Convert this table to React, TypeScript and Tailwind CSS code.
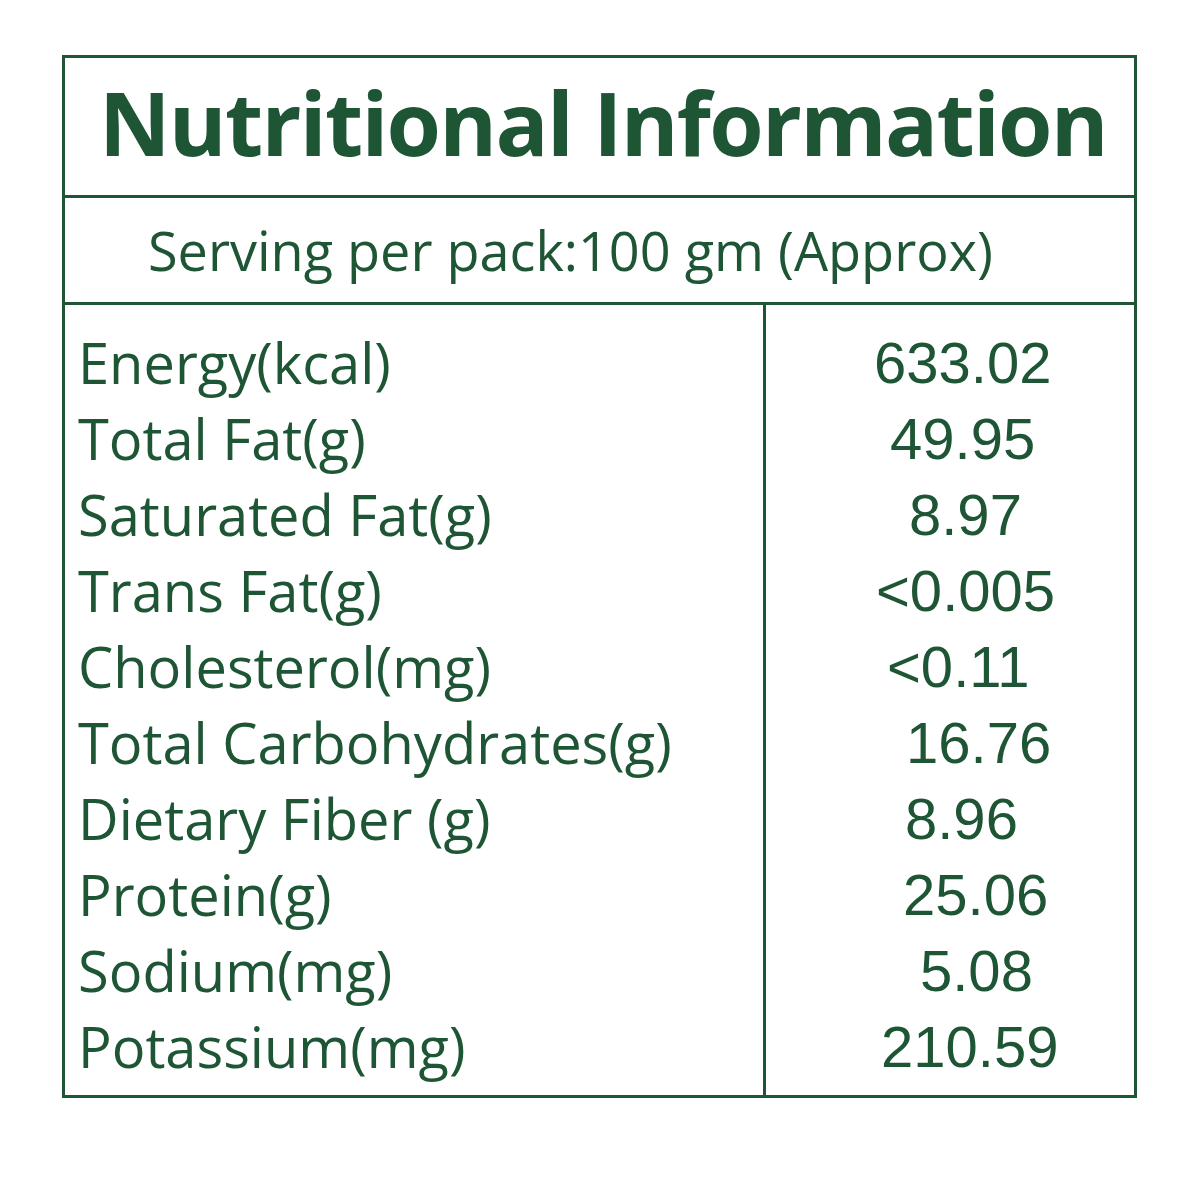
const rows: { label: string; value: string; pad: string }[] = [
  { label: 'Energy(kcal)', value: '633.02', pad: 'pl-[108px]' },
  { label: 'Total Fat(g)', value: '49.95', pad: 'pl-[124px]' },
  { label: 'Saturated Fat(g)', value: '8.97', pad: 'pl-[143px]' },
  { label: 'Trans Fat(g)', value: '<0.005', pad: 'pl-[110px]' },
  { label: 'Cholesterol(mg)', value: '<0.11', pad: 'pl-[121px]' },
  { label: 'Total Carbohydrates(g)', value: '16.76', pad: 'pl-[140px]' },
  { label: 'Dietary Fiber (g)', value: '8.96', pad: 'pl-[139px]' },
  { label: 'Protein(g)', value: '25.06', pad: 'pl-[137px]' },
  { label: 'Sodium(mg)', value: '5.08', pad: 'pl-[154px]' },
  { label: 'Potassium(mg)', value: '210.59', pad: 'pl-[115px]' },
]

export default function App() {
  return (
    <div className="h-[1200px] w-[1200px] bg-white pl-[62px] pt-[55px] text-[#1e5535]">
      <div className="w-[1075px] border-[3px] border-[#1e5535]">
        <div className="flex h-[140px] items-center border-b-[3px] border-[#1e5535] pb-[10px] pl-[34px]">
          <h1 className="font-['Open_Sans',sans-serif] text-[88px] font-bold leading-none tracking-[-1.7px]">
            Nutritional Information
          </h1>
        </div>
        <div className="flex h-[107px] items-center border-b-[3px] border-[#1e5535] pl-[83px]">
          <p className="font-['Open_Sans',sans-serif] text-[54px] leading-none">
            Serving per pack:100 gm (Approx)
          </p>
        </div>
        <div className="flex">
          <div className="w-[701px] border-r-[3px] border-[#1e5535] pb-[11px] pl-[13px] pt-[19px]">
            {rows.map((r) => (
              <div
                key={r.label}
                className="flex h-[76px] items-center font-['Open_Sans',sans-serif] text-[56px] leading-none"
              >
                {r.label}
              </div>
            ))}
          </div>
          <div className="flex-1 pt-[20px]">
            {rows.map((r) => (
              <div
                key={r.label}
                className={`flex h-[76px] items-center font-['Liberation_Sans',Arial,sans-serif] text-[58px] leading-none ${r.pad}`}
              >
                {r.value}
              </div>
            ))}
          </div>
        </div>
      </div>
    </div>
  )
}
